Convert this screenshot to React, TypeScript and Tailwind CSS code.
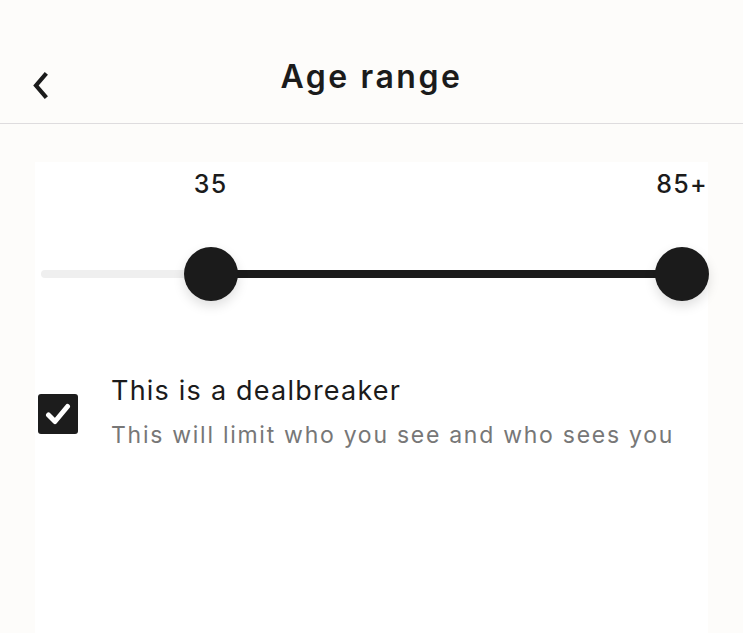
import React, { useState } from 'react';

const font = { fontFamily: 'Inter, "Noto Sans", sans-serif' };

// scale of the slider; the visible ends sit at these values
const SCALE_MIN = 17;
const SCALE_MAX = 85;

const pct = (v: number) => ((v - SCALE_MIN) / (SCALE_MAX - SCALE_MIN)) * 100;

const Thumb: React.FC<{ at: number }> = ({ at }) => (
  <div
    className="absolute top-1/2 h-[54px] w-[54px] -translate-x-1/2 -translate-y-1/2 rounded-full bg-[#1b1b1b] shadow-[0_5px_12px_rgba(0,0,0,0.13)]"
    style={{ left: `${at}%` }}
  />
);

export default function App() {
  const [checked, setChecked] = useState(true);
  const lo = 35;
  const hi = 85;

  return (
    <div className="min-h-[633px] w-full bg-[#fdfcfa] text-[#1b1b1b]" style={font}>
      {/* header */}
      <div className="relative flex h-[124px] justify-center border-b border-[#dedcde] pt-[57px]">
        <button className="absolute left-[30px] top-[70px] flex h-[30px] w-[20px] items-center justify-center">
          <svg width="18" height="27" viewBox="0 0 18 27" fill="none">
            <path d="M14 3 L5 13.5 L14 24" stroke="#1b1b1b" strokeWidth="4.2" strokeLinecap="square" />
          </svg>
        </button>
        <h1 className="text-[32px] font-semibold leading-[40px] tracking-[0.08em]">Age range</h1>
      </div>

      {/* panel */}
      <div className="mx-[35px] mt-[38px] flex min-h-[471px] flex-col bg-white">
        <div className="pl-[6px] pr-[26px]">
          {/* values */}
          <div className="relative mt-[6px] flex justify-end text-[25px] font-medium leading-[32px] tracking-[0.05em]">
            <span className="absolute -translate-x-1/2" style={{ left: `${pct(lo)}%` }}>
              {lo}
            </span>
            <span className="-mr-[26px]">{hi}+</span>
          </div>

          {/* slider */}
          <div className="relative mt-[70px] h-[8px] rounded-full bg-[#efefef]">
            <div
              className="absolute inset-y-0 bg-[#1b1b1b]"
              style={{ left: `${pct(lo)}%`, width: `${pct(hi) - pct(lo)}%` }}
            />
            <Thumb at={pct(lo)} />
            <Thumb at={pct(hi)} />
          </div>
        </div>

        {/* dealbreaker */}
        <div className="mt-[95px] flex items-start gap-[33px] pl-[3px]">
          <button
            onClick={() => setChecked(!checked)}
            className="mt-[21px] flex h-[40px] w-[40px] shrink-0 items-center justify-center rounded-[3px] bg-[#1c1c1c]"
          >
            {checked && (
              <svg width="26" height="22" viewBox="0 0 26 22" fill="none">
                <path d="M3.5 12 L10 18.5 L22.5 3.5" stroke="white" strokeWidth="5" strokeLinecap="round" strokeLinejoin="round" />
              </svg>
            )}
          </button>
          <div className="flex flex-col gap-[11px]">
            <p className="text-[27px] leading-[36px] tracking-[0.045em]">This is a dealbreaker</p>
            <p className="text-[23px] leading-[30px] tracking-[0.075em] text-[#777777]">
              This will limit who you see and who sees you
            </p>
          </div>
        </div>
      </div>
    </div>
  );
}
